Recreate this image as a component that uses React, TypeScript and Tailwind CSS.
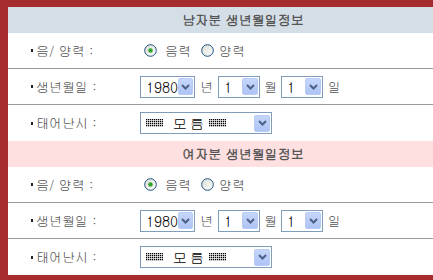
import React from 'react';

const font = { fontFamily: '"Gulim", "Noto Sans CJK KR", "Noto Sans", sans-serif' };

const Arrow: React.FC = () => (
  <span className="ml-auto mr-[1px] flex h-[17px] w-[16px] items-center justify-center rounded-[2px] bg-gradient-to-b from-[#c6d6fb] to-[#aec4f6] border border-[#b8cbf5]">
    <svg width="9" height="6" viewBox="0 0 9 6">
      <path d="M1 1 L4.5 4.5 L8 1" stroke="#4d6185" strokeWidth="2" fill="none" />
    </svg>
  </span>
);

const Select: React.FC<{ value: React.ReactNode; width: string }> = ({ value, width }) => (
  <div className={`flex h-[22px] items-center border border-[#7f9db9] bg-white pl-[5px] ${width}`}>
    <span className="text-[14px] leading-none text-black">{value}</span>
    <Arrow />
  </div>
);

// dotted block used as filler around "모 름"
const Dots: React.FC = () => (
  <svg width="17" height="8" viewBox="0 0 17 8">
    <defs>
      <pattern id="dp" width="2" height="2" patternUnits="userSpaceOnUse">
        <rect width="1.3" height="1.3" fill="#000" />
      </pattern>
    </defs>
    <rect width="17" height="8" fill="url(#dp)" />
  </svg>
);

const Radio: React.FC<{ checked?: boolean }> = ({ checked }) => (
  <svg width="13" height="13" viewBox="0 0 13 13">
    <defs>
      <linearGradient id="rg" x1="0" y1="0" x2="1" y2="1">
        <stop offset="0" stopColor="#dcdcd5" />
        <stop offset="1" stopColor="#ffffff" />
      </linearGradient>
    </defs>
    <circle cx="6.5" cy="6.5" r="5.8" fill="url(#rg)" stroke="#1c5180" strokeWidth="1" />
    {checked && <circle cx="6.5" cy="6.5" r="2.3" fill="#2fa52f" />}
  </svg>
);

const Row: React.FC<{ label: string; last?: boolean; children: React.ReactNode }> = ({ label, last, children }) => (
  <div className={`flex h-[36px] items-center ${last ? '' : 'border-b border-[#999999]'}`}>
    <div className="flex w-[132px] items-center pl-[23px] text-[13px] text-[#555]">
      <span className="mr-[3px] inline-block h-[3px] w-[2px] bg-[#222]" />
      {label}
    </div>
    <div className="flex items-center text-[13px] text-[#555]">{children}</div>
  </div>
);

const Section: React.FC<{ title: string; headerBg: string }> = ({ title, headerBg }) => (
  <div>
    <div className={`flex h-[26px] items-center justify-center text-[13px] font-bold text-[#555] ${headerBg}`}>{title}</div>
    <Row label="음/ 양력 :">
      <span className="ml-[4px] flex items-center gap-[8px]">
        <Radio checked />
        <span>음력</span>
      </span>
      <span className="ml-[10px] flex items-center gap-[5px]">
        <Radio />
        <span>양력</span>
      </span>
    </Row>
    <Row label="생년월일 :">
      <Select value="1980" width="w-[55px]" />
      <span className="mx-[5px]">년</span>
      <Select value="1" width="w-[42px]" />
      <span className="mx-[4px]">월</span>
      <Select value="1" width="w-[42px]" />
      <span className="ml-[5px]">일</span>
    </Row>
    <Row label="태어난시 :" last>
      <div className="flex h-[22px] w-[132px] items-center border border-[#7f9db9] bg-white pl-[5px]">
        <span className="flex items-center text-[14px] leading-none text-black">
          <Dots />
          <span className="ml-[10px]">모</span>
          <span className="ml-[3px]">름</span>
          <span className="ml-[5px] flex"><Dots /></span>
        </span>
        <Arrow />
      </div>
    </Row>
  </div>
);

export default function App() {
  return (
    <div style={font} className="h-[280px] w-[433px] overflow-hidden bg-[#a52b2f] pl-[8px] pt-[7px]">
      <div className="w-[470px] bg-white">
        <Section title="남자분 생년월일정보" headerBg="bg-[#d4dee6]" />
        <Section title="여자분 생년월일정보" headerBg="bg-[#ffe0e0]" />
      </div>
    </div>
  );
}
